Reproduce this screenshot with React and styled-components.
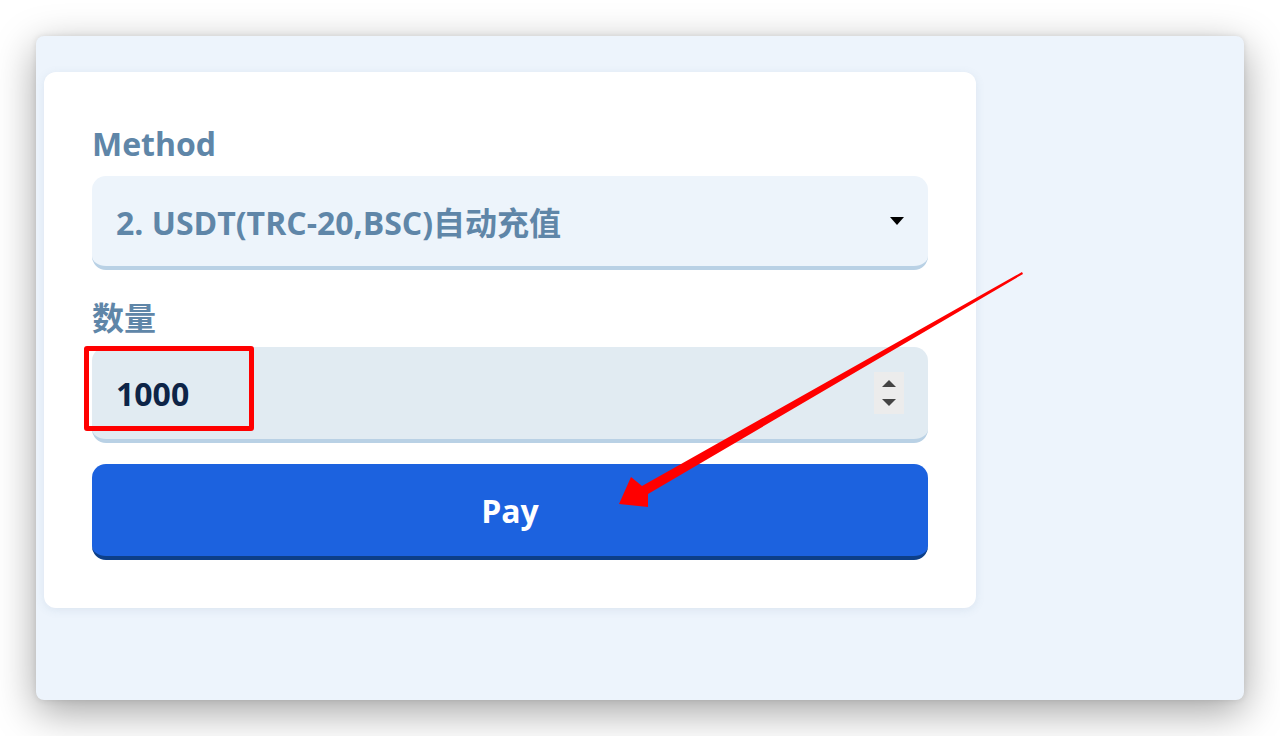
import React from 'react';
import styled, { createGlobalStyle } from 'styled-components';

const GlobalStyle = createGlobalStyle`
  html, body {
    margin: 0;
    padding: 0;
    background: #ffffff;
  }
  body {
    font-family: "Open Sans", "Noto Sans", "Noto Sans CJK SC", sans-serif;
  }
`;

const Page = styled.div`
  position: relative;
  width: 1280px;
  height: 736px;
  padding: 36px;
  box-sizing: border-box;
  overflow: hidden;
`;

const Window = styled.div`
  width: 1208px;
  height: 664px;
  box-sizing: border-box;
  padding: 36px 0 0 8px;
  background: #edf4fc;
  border-radius: 8px;
  box-shadow: 0 12px 40px rgba(0, 0, 0, 0.36), 0 0 6px rgba(0, 0, 0, 0.1);
`;

const Card = styled.div`
  width: 932px;
  height: 536px;
  box-sizing: border-box;
  padding: 48px;
  background: #ffffff;
  border-radius: 12px;
  box-shadow: 0 2px 10px rgba(90, 120, 160, 0.12);
  display: flex;
  flex-direction: column;
`;

const Label = styled.div`
  font-size: 32px;
  line-height: 48px;
  font-weight: 700;
  color: #5f86a8;
  margin-top: ${(p) => p.$top || 0}px;
  margin-bottom: ${(p) => p.$bottom || 8}px;
`;

const Field = styled.div`
  position: relative;
  height: ${(p) => p.$h || 94}px;
  flex-shrink: 0;
  box-sizing: border-box;
  padding: 0 24px;
  display: flex;
  align-items: center;
  justify-content: space-between;
  border-radius: 14px;
  background: ${(p) => p.$bg};
  border-bottom: 4px solid #b9d1e5;
`;

const FieldText = styled.span`
  font-size: 32px;
  font-weight: 700;
  color: ${(p) => p.$color};
  font-family: "Open Sans", "Noto Sans CJK SC", sans-serif;
`;

const Caret = styled.span`
  width: 0;
  height: 0;
  border-left: 7px solid transparent;
  border-right: 7px solid transparent;
  border-top: 8px solid #000;
`;

const Spinner = styled.div`
  width: 30px;
  height: 42px;
  background: #ececec;
  display: flex;
  flex-direction: column;
  align-items: center;
  justify-content: center;
  gap: 12px;
`;

const SpinArrow = styled.span`
  width: 0;
  height: 0;
  border-left: 7px solid transparent;
  border-right: 7px solid transparent;
  ${(p) => (p.$up ? 'border-bottom: 7px solid #444;' : 'border-top: 7px solid #444;')}
`;

const Highlight = styled.div`
  position: absolute;
  left: -8px;
  top: -1px;
  width: 170px;
  height: 85px;
  box-sizing: border-box;
  border: 5px solid #ff0000;
  border-radius: 3px;
  pointer-events: none;
`;

const PayButton = styled.button`
  margin-top: 21px;
  height: 96px;
  flex-shrink: 0;
  border: none;
  border-bottom: 4px solid #0d3f88;
  border-radius: 14px;
  background: #1c62df;
  color: #ffffff;
  font-family: "Open Sans", sans-serif;
  font-size: 32px;
  font-weight: 700;
  cursor: pointer;
`;

const Overlay = styled.svg`
  position: absolute;
  left: 0;
  top: 0;
  pointer-events: none;
`;

export default function App() {
  return (
    <>
      <GlobalStyle />
      <Page>
        <Window>
          <Card>
            <Label>Method</Label>
            <Field $bg="#edf4fb">
              <FieldText $color="#5f86a8">2. USDT(TRC-20,BSC)自动充值</FieldText>
              <Caret />
            </Field>
            <Label $top={24} $bottom={5}>数量</Label>
            <Field $bg="#e1ebf2" $h={96}>
              <FieldText $color="#0d2447">1000</FieldText>
              <Spinner>
                <SpinArrow $up />
                <SpinArrow />
              </Spinner>
              <Highlight />
            </Field>
            <PayButton>Pay</PayButton>
          </Card>
        </Window>
        <Overlay width="1280" height="736" viewBox="0 0 1280 736">
          <polygon
            fill="#ff0000"
            points="619,504 631,477 642,486 1022,272 1023,274 648,494 648,507"
          />
        </Overlay>
      </Page>
    </>
  );
}
